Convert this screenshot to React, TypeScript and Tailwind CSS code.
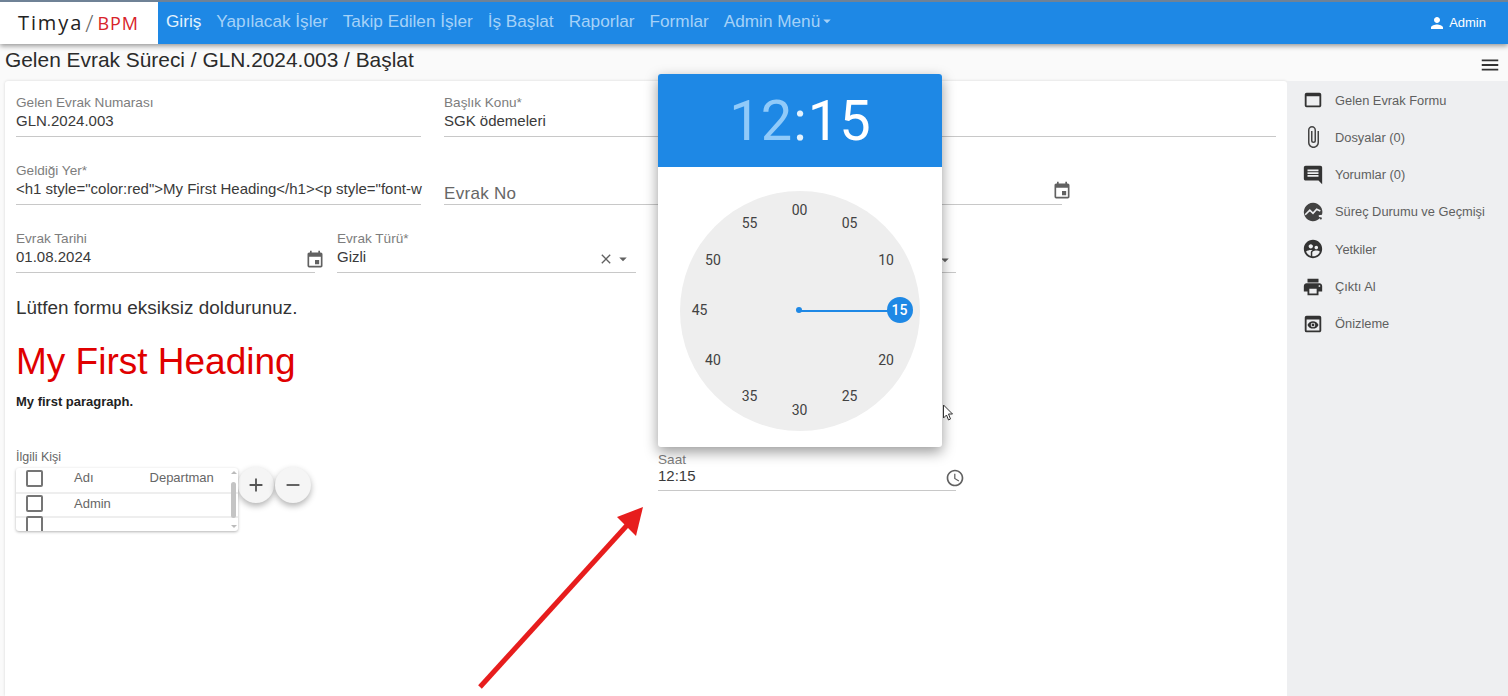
import React from "react";
import {
  MdEvent, MdWebAsset, MdAttachFile, MdComment, MdSupervisedUserCircle, MdPrint, MdPreview,
  MdPerson, MdAccessTime, MdClose, MdArrowDropDown, MdAdd, MdRemove, MdMenu,
} from "react-icons/md";

const nav = ["Yapılacak İşler", "Takip Edilen İşler", "İş Başlat", "Raporlar", "Formlar"];

function ProcessIcon() {
  return (
    <svg viewBox="0 0 24 24" width="22" height="22">
      <path fill="#424242" d="M12 2a10 10 0 1 0 8.2 15.7l-1.7-.2-.3-2 3.6-.6A10 10 0 0 0 12 2z" />
      <path fill="none" stroke="#eeeff1" strokeWidth="1.8" d="M3.5 15l5-5 3.5 3.5 4-4.5 4 2" />
      <circle cx="20.5" cy="19" r="1.2" fill="#424242" />
    </svg>
  );
}

const side: [React.ReactNode, string][] = [
  [<MdWebAsset size={22} color="#333" />, "Gelen Evrak Formu"],
  [<MdAttachFile size={24} color="#444" />, "Dosyalar (0)"],
  [<MdComment size={22} color="#333" />, "Yorumlar (0)"],
  [<ProcessIcon />, "Süreç Durumu ve Geçmişi"],
  [<MdSupervisedUserCircle size={22} color="#333" />, "Yetkiler"],
  [<MdPrint size={22} color="#333" />, "Çıktı Al"],
  [<MdPreview size={22} color="#333" />, "Önizleme"],
];

function Field({
  label, value, className = "h-[42px]", valueClass = "mt-[2px]", children,
}: { label?: string; value?: string; className?: string; valueClass?: string; children?: React.ReactNode }) {
  return (
    <div className={"relative border-b border-[#c8c8c8] " + className}>
      <div className="mt-[1px] h-[14px] whitespace-nowrap text-[13.6px] leading-[14px] text-[#7d7d7d]">{label}</div>
      <div className={"whitespace-nowrap text-[15px] leading-[18px] text-[#3a3a3a] " + valueClass}>{value}</div>
      {children}
    </div>
  );
}

function Check({ className = "" }: { className?: string }) {
  return <div className={"h-[17px] w-[17px] rounded-[2px] border-2 border-[#757575] " + className} />;
}

const minutes = ["00", "05", "10", "15", "20", "25", "30", "35", "40", "45", "50", "55"];

function Dial() {
  return (
    <div className="relative h-[240px] w-[240px] rounded-full bg-[#eeeeee] font-['Roboto',sans-serif]">
      <div className="absolute left-[116px] top-[116px] h-[6px] w-[6px] rounded-full bg-[#1e88e5]" />
      <div className="absolute left-[119px] top-[118.5px] h-[2px] w-[95px] bg-[#1e88e5]" />
      <div className="absolute left-[207px] top-[106px] h-[26px] w-[26px] rounded-full bg-[#1e88e5]" />
      {minutes.map((m, i) => {
        const a = (i * 30 * Math.PI) / 180;
        return (
          <span
            key={m}
            className={"absolute flex h-[20px] w-[24px] items-center justify-center text-[14px] " + (m === "15" ? "font-medium text-white" : "text-[#424242]")}
            style={{ left: 119.5 + 100 * Math.sin(a) - 12, top: 119 - 100 * Math.cos(a) - 10 }}
          >
            {m}
          </span>
        );
      })}
    </div>
  );
}

export default function App() {
  return (
    <div className="relative flex h-[696px] w-[1508px] flex-col overflow-hidden bg-[#fafafa] font-['Liberation_Sans',sans-serif]">
      <header className="relative z-10 flex h-[44px] shrink-0 items-stretch border-t-2 border-[#6f8296] bg-[#1e88e5] shadow-[0_2px_5px_rgba(0,0,0,0.4)]">
        <div className="flex w-[158px] items-center justify-start whitespace-nowrap bg-white pl-[18px] font-['Open_Sans',sans-serif]">
          <span className="text-[20px] tracking-[1.9px] text-[#222]">Timya</span>
          <span className="ml-[2px] text-[24px] font-light leading-none text-[#666]">/</span>
          <span className="ml-[4px] text-[18px] tracking-[0.9px] text-[#d8232a]">BPM</span>
        </div>
        <nav className="-mt-[3px] flex items-center gap-[15px] whitespace-nowrap pl-[8px] text-[17.2px] text-[#a5d2f8]">
          <span className="text-[#e3f2fd]">Giriş</span>
          {nav.map((n) => (
            <span key={n}>{n}</span>
          ))}
          <span className="flex items-center">Admin Menü<MdArrowDropDown size={18} className="-ml-[2px]" /></span>
        </nav>
        <div className="ml-auto flex items-center gap-[3px] pr-[22px] text-[13px] text-white">
          <MdPerson size={18} />
          <span>Admin</span>
        </div>
      </header>

      <div className="flex h-[37px] shrink-0 items-center justify-between pl-[5px] pr-[7px]">
        <h1 className="-mt-[5px] whitespace-nowrap text-[20.9px] text-[#2b2b2b]">Gelen Evrak Süreci / GLN.2024.003 / Başlat</h1>
        <MdMenu size={22} color="#333" className="mt-[4px]" />
      </div>

      <main className="flex min-h-0 flex-1">
        <section className="ml-[5px] flex-1 rounded-t-[3px] bg-white px-[11px] pt-[14px] shadow-[0_0_3px_rgba(0,0,0,0.15)]">
          <div className="flex gap-[23px]">
            <Field className="h-[42px] w-[405px]" label="Gelen Evrak Numarası" value="GLN.2024.003" />
            <Field className="h-[42px] flex-1" label="Başlık Konu*" value="SGK ödemeleri" />
          </div>
          <div className="mt-[26px] flex gap-[23px]">
            <Field className="h-[42px] w-[405px]" label="Geldiği Yer*" value={'<h1 style="color:red">My First Heading</h1><p style="font-w'} />
            <div className="relative h-[42px] w-[618px] border-b border-[#c8c8c8] pt-[21px] text-[17px] leading-[20px] tracking-[0.3px] text-[#666]">
              Evrak No
              <MdEvent size={20} color="#616161" className="absolute -right-[10px] top-[18px]" />
            </div>
          </div>
          <div className="mt-[26px] grid grid-cols-[299px_299px_298px] gap-x-[22px]">
            <Field label="Evrak Tarihi" value="01.08.2024">
              <MdEvent size={20} color="#616161" className="absolute -right-[10px] top-[19px]" />
            </Field>
            <Field label="Evrak Türü*" value="Gizli">
              <div className="absolute right-[4px] top-[19px] flex items-center">
                <MdClose size={16} color="#616161" />
                <MdArrowDropDown size={18} color="#616161" />
              </div>
            </Field>
            <Field label="" value="">
              <MdArrowDropDown size={18} color="#616161" className="absolute right-[2px] top-[20px]" />
            </Field>
          </div>

          <p className="mt-[23px] text-[18.9px] leading-[24px] text-[#333]">Lütfen formu eksiksiz doldurunuz.</p>
          <h2 className="mt-[21px] text-[37px] leading-[42px] text-[#e00000]">My First Heading</h2>
          <p className="mt-[11px] text-[13px] font-bold leading-[16px] text-[#222]">My first paragraph.</p>

          <div className="mt-[40px] grid grid-cols-[620px_298px] gap-x-[22px]">
            <div>
              <div className="text-[12.5px] leading-[14px] text-[#666]">İlgili Kişi</div>
              <div className="mt-[4px] flex items-start">
                <div className="relative h-[63px] w-[222px] overflow-hidden rounded-[3px] bg-white text-[13px] text-[#666] shadow-[0_1px_3px_rgba(0,0,0,0.3)]">
                  <div className="flex h-[26px] items-center border-b-2 border-[#eee] pb-[4px] pl-[10px]">
                    <Check />
                    <span className="ml-[31px]">Adı</span>
                    <span className="ml-[56px]">Departman</span>
                  </div>
                  <div className="flex h-[24px] items-center border-b-2 border-[#eee] pb-[3px] pl-[10px]">
                    <Check />
                    <span className="ml-[31px]">Admin</span>
                  </div>
                  <div className="-mt-[2px] pl-[10px]"><Check /></div>
                  <div className="absolute right-[2px] top-0 flex h-full w-[5px] flex-col items-center justify-between py-[3px]">
                    <span className="h-0 w-0 border-x-[3px] border-b-[3px] border-x-transparent border-b-[#bbb]" />
                    <span className="h-[36px] w-[5px] rounded-[3px] bg-[#c4c4c4]" />
                    <span className="h-0 w-0 border-x-[3px] border-t-[3px] border-x-transparent border-t-[#bbb]" />
                  </div>
                </div>
                <button className="-mt-[1px] flex h-[36px] w-[36px] items-center justify-center rounded-full bg-[#f5f5f5] shadow-[0_3px_6px_rgba(0,0,0,0.3)]">
                  <MdAdd size={22} color="#555" />
                </button>
                <button className="-mt-[1px] ml-[1px] flex h-[36px] w-[36px] items-center justify-center rounded-full bg-[#f5f5f5] shadow-[0_3px_6px_rgba(0,0,0,0.3)]">
                  <MdRemove size={22} color="#555" />
                </button>
              </div>
            </div>
            <Field className="mt-[2px] h-[39px]" valueClass="mt-0" label="Saat" value="12:15">
              <MdAccessTime size={20} color="#616161" className="absolute -right-[9px] top-[16px]" />
            </Field>
          </div>
        </section>

        <aside className="w-[221px] shrink-0 bg-[#eeeff1] pt-[0.5px]">
          {side.map(([icon, text]) => (
            <div key={text} className="flex h-[37.3px] items-center whitespace-nowrap text-[12.85px] text-[#5f5f5f]">
              <span className="flex w-[48px] justify-center pl-[4px]">{icon}</span>
              <span>{text}</span>
            </div>
          ))}
        </aside>
      </main>

      {/* time picker popover */}
      <div className="absolute left-[658px] top-[74px] z-20 h-[373px] w-[284px] overflow-hidden rounded-[3px] bg-white shadow-[0_5px_14px_rgba(0,0,0,0.4)]">
        <div className="flex h-[93px] items-center justify-center bg-[#1e88e5] font-['Roboto',sans-serif] text-[56px] leading-none">
          <span className="text-[#90caf9]">12</span>
          <span className="mx-[1px] text-[#e3f2fd]">:</span>
          <span className="text-white">15</span>
        </div>
        <div className="flex justify-center pt-[24px]">
          <Dial />
        </div>
      </div>

      {/* mouse cursor */}
      <svg className="absolute left-[942px] top-[404px] z-30" width="12" height="18" viewBox="0 0 12 18">
        <path d="M1.5 1v13l3-3 2 5 2-1-2-5h4z" fill="#fff" stroke="#333" strokeWidth="1" />
      </svg>

      {/* annotation arrow */}
      <svg className="absolute left-[470px] top-[500px] z-30" width="180" height="196" viewBox="0 0 180 196">
        <path d="M10 187 L160 22" stroke="#e71d1d" strokeWidth="5" fill="none" />
        <path d="M173 7 L147 17 L166 36 Z" fill="#e71d1d" />
      </svg>
    </div>
  );
}
